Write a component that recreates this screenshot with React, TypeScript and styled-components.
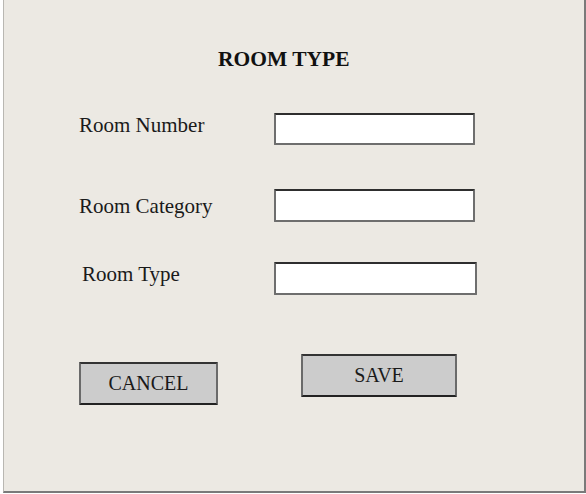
import styled, { createGlobalStyle } from "styled-components";

const GlobalStyle = createGlobalStyle`
  body {
    margin: 0;
    background: #ffffff;
    font-family: "Liberation Serif", "Times New Roman", serif;
  }
`;

const Panel = styled.div`
  box-sizing: border-box;
  width: 583px;
  height: 493px;
  margin-left: 3px;
  padding: 47px 0 0 75px;
  background: #ece9e3;
  border-left: 1px solid #b9b7b2;
  border-right: 2px solid #7a7a7a;
  border-bottom: 2px solid #7a7a7a;
`;

const Title = styled.h1`
  margin: 0 0 0 139px;
  font-size: 21.5px;
  line-height: 24px;
  font-weight: bold;
  color: #111;
`;

const Row = styled.div<{ $gap: number }>`
  display: flex;
  align-items: flex-start;
  margin-top: ${(p) => p.$gap}px;
`;

const Label = styled.label<{ $indent?: number; $drop?: number }>`
  box-sizing: border-box;
  width: 195px;
  padding-left: ${(p) => p.$indent ?? 0}px;
  margin-top: ${(p) => p.$drop ?? 0}px;
  font-size: 21px;
  line-height: 24px;
  color: #1a1a1a;
`;

const Field = styled.input<{ $w: number; $h: number }>`
  box-sizing: border-box;
  width: ${(p) => p.$w}px;
  height: ${(p) => p.$h}px;
  margin: 0;
  padding: 0 6px;
  background: #ffffff;
  border: 2px solid #6e6e6e;
  border-top-color: #2e2e2e;
  border-radius: 1px;
  outline: none;
  font-family: inherit;
  font-size: 18px;
`;

const Actions = styled.div`
  display: flex;
  align-items: flex-start;
  gap: 83px;
  margin-top: 59px;
`;

const Button = styled.button<{ $w: number; $h: number; $drop?: number }>`
  box-sizing: border-box;
  width: ${(p) => p.$w}px;
  height: ${(p) => p.$h}px;
  margin-top: ${(p) => p.$drop ?? 0}px;
  padding: 0;
  background: #cccccc;
  border: 2px solid #6a6a6a;
  border-top-color: #333;
  border-bottom-color: #222;
  border-radius: 1px;
  font-family: "Liberation Serif", "Times New Roman", serif;
  font-size: 20px;
  color: #1a1a1a;
  cursor: pointer;
`;

export default function App() {
  return (
    <>
      <GlobalStyle />
      <Panel>
        <Title>ROOM TYPE</Title>

        <Row $gap={42}>
          <Label>Room Number</Label>
          <Field $w={201} $h={32} />
        </Row>

        <Row $gap={44}>
          <Label $drop={5}>Room Category</Label>
          <Field $w={201} $h={33} />
        </Row>

        <Row $gap={40}>
          <Label $indent={3}>Room Type</Label>
          <Field $w={203} $h={33} />
        </Row>

        <Actions>
          <Button $w={139} $h={43} $drop={8}>CANCEL</Button>
          <Button $w={156} $h={43}>SAVE</Button>
        </Actions>
      </Panel>
    </>
  );
}
